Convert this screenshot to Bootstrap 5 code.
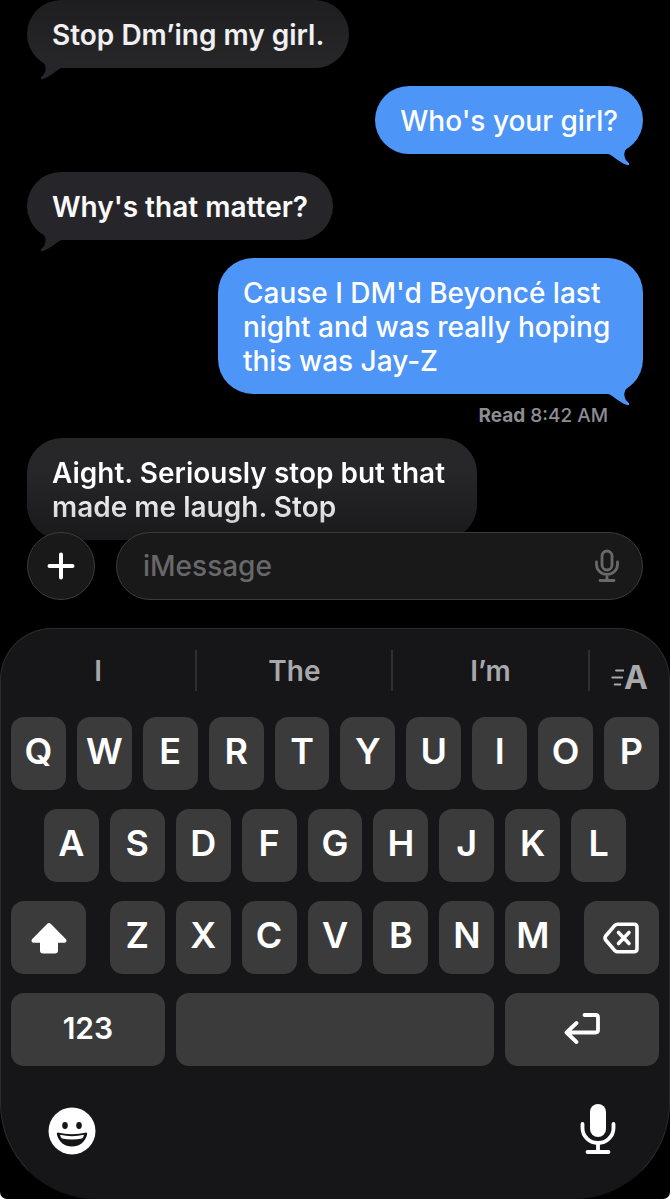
<!DOCTYPE html>
<html lang="en">
<head>
<meta charset="utf-8">
<meta name="viewport" content="width=device-width, initial-scale=1">
<title>Messages</title>
<link href="https://cdn.jsdelivr.net/npm/bootstrap@5.3.0/dist/css/bootstrap.min.css" rel="stylesheet">
<style>
  body { background: #fff; font-family: Inter, "Liberation Sans", sans-serif; font-size: 28px; line-height: 34px; font-weight: 500; }
  button { font: inherit; color: inherit; border: 0; padding: 0; background: none; }
  svg { display: block; }
  .phone { background: #000; color: #fff; border-radius: 0 0 7px 7px; }
  .thread { padding: 0 27px; gap: 18px; }
  .bubble { position: relative; padding: 18px 25px 16px; border-radius: 35px; max-width: 69%; }
  .bubble.received { background: #26262a; color: #fafafb; font-weight: 600; }
  .bubble.sent { background: #4e95f8; }
  .bubble.wide { max-width: 73%; }
  .bubble.top-fade { background: linear-gradient(#1e1e20, #27272a); color: #f0f0f2; }
  .bubble.end-fade { background: linear-gradient(#27272a 30%, #19191b); }
  .end-fade span { color: transparent; background: linear-gradient(#fff 40%, #cfcfd2); background-clip: text; -webkit-background-clip: text; }
  .tail { position: absolute; left: 0; bottom: -12px; }
  .received .tail { fill: #26262a; }
  .sent .tail { left: auto; right: 0; transform: scaleX(-1); fill: #4e95f8; }
  .receipt { font-size: 19px; line-height: 22px; color: #8d8d92; padding-right: 35px; margin: -7px 0; }
  .compose { position: relative; padding: 0 27px; margin-top: -8px; gap: 21px; }
  .glass { background: #191919; border: 1px solid #3b3b3d; height: 68px; border-radius: 34px; }
  .plus { width: 68px; }
  .field { padding: 0 20px 0 26px; }
  .field input { background: none; border: 0; outline: 0; color: #fff; font: inherit; padding: 0; }
  .field input::placeholder { color: #68686a; opacity: 1; }
  .keyboard { margin-top: 28px; background: #161618; border: 1px solid #2c2c2e; border-bottom-color: #161618; border-radius: 52px 52px 96px 96px; padding: 21px 10px 43px; }
  .suggestions { height: 41px; margin: 0 -10px 26px; color: #a9a9ac; font-weight: 600; }
  .suggestions .word { flex: 196 1 0; border-right: 2px solid #2f2f31; }
  .suggestions .fmt { flex: 80 1 0; font-size: 32px; font-weight: 700; padding-top: 14px; }
  .keys { gap: 19px; font-size: 36px; font-weight: 600; }
  .keyrow { gap: 11px; }
  .key { height: 73px; width: calc((100% - 99px) / 10); background: #3b3b3b; border-radius: 13px; padding-bottom: 5px; }
  .letters { gap: 11px; width: calc((100% - 99px) / 10 * 7 + 66px); }
  .letters .key { width: auto; flex: 1 1 0; }
  .key.side { width: 75px; padding: 0; }
  .key.space { width: calc((100% - 11px) / 2); }
  .key.bottom { flex: 1 1 0; font-size: 30px; padding-bottom: 4px; }
  .dock { margin: 37px 42px 0 37px; }
</style>
</head>
<body>
<div class="phone d-flex flex-column min-vh-100">
  <main class="thread d-flex flex-column">
    <div class="bubble received top-fade align-self-start">Stop Dm’ing my girl.
      <svg class="tail" width="40" height="23" viewBox="0 0 40 23"><path d="M12 1C17 5 20 9 18 15C17 18 15 19 14 20Q13 23 16 22C27 18 30 11 38 10L30 1Z"/></svg></div>
    <div class="bubble sent align-self-end">Who's your girl?
      <svg class="tail" width="40" height="23" viewBox="0 0 40 23"><path d="M12 1C17 5 20 9 18 15C17 18 15 19 14 20Q13 23 16 22C27 18 30 11 38 10L30 1Z"/></svg></div>
    <div class="bubble received align-self-start">Why's that matter?
      <svg class="tail" width="40" height="23" viewBox="0 0 40 23"><path d="M12 1C17 5 20 9 18 15C17 18 15 19 14 20Q13 23 16 22C27 18 30 11 38 10L30 1Z"/></svg></div>
    <div class="bubble sent align-self-end">Cause I DM'd Beyoncé last night and was really hoping this was Jay-Z
      <svg class="tail" width="40" height="23" viewBox="0 0 40 23"><path d="M12 1C17 5 20 9 18 15C17 18 15 19 14 20Q13 23 16 22C27 18 30 11 38 10L30 1Z"/></svg></div>
    <div class="receipt align-self-end"><strong>Read</strong> 8:42 AM</div>
    <div class="bubble received wide end-fade align-self-start"><span class="d-block">Aight. Seriously stop but that made me laugh. Stop</span></div>
  </main>

  <form class="compose d-flex">
    <button type="button" class="glass plus flex-shrink-0 d-flex align-items-center justify-content-center" aria-label="Add">
      <svg width="28" height="28" viewBox="0 0 28 28" stroke="#fff" stroke-width="4" stroke-linecap="round"><path d="M14 2.500V25.500M2.500 14H25.500"/></svg>
    </button>
    <div class="glass field d-flex align-items-center flex-grow-1">
      <input class="flex-grow-1 w-100" type="text" placeholder="iMessage" aria-label="iMessage">
      <button type="button" aria-label="Dictate">
        <svg width="30" height="34" viewBox="0 0 30 34" fill="none" stroke="#69696b" stroke-width="2.800" stroke-linecap="round"><rect x="10" y="2" width="10" height="19" rx="5"/><path d="M4.500 13V15.500a10.500 10 0 0 0 21 0V13M15 25.500V31M8 31.500H22"/></svg>
      </button>
    </div>
  </form>

  <section class="keyboard flex-grow-1" aria-label="Keyboard">
    <div class="suggestions d-flex">
      <button type="button" class="word">I</button>
      <button type="button" class="word">The</button>
      <button type="button" class="word">I’m</button>
      <button type="button" class="fmt d-flex align-items-center justify-content-center" aria-label="Text formatting">
        <svg width="13" height="20" viewBox="0 0 14 20" stroke="#a9a9ac" stroke-width="2.200" stroke-linecap="round"><path d="M5.500 2H14M1.500 9.500H12M4 17H10"/></svg>A
      </button>
    </div>
    <div class="keys d-flex flex-column">
      <div class="keyrow d-flex">
        <button type="button" class="key">Q</button><button type="button" class="key">W</button><button type="button" class="key">E</button><button type="button" class="key">R</button><button type="button" class="key">T</button><button type="button" class="key">Y</button><button type="button" class="key">U</button><button type="button" class="key">I</button><button type="button" class="key">O</button><button type="button" class="key">P</button>
      </div>
      <div class="keyrow d-flex justify-content-center">
        <button type="button" class="key">A</button><button type="button" class="key">S</button><button type="button" class="key">D</button><button type="button" class="key">F</button><button type="button" class="key">G</button><button type="button" class="key">H</button><button type="button" class="key">J</button><button type="button" class="key">K</button><button type="button" class="key">L</button>
      </div>
      <div class="d-flex justify-content-between">
        <button type="button" class="key side d-flex align-items-center justify-content-center" aria-label="Shift">
          <svg width="36" height="32" viewBox="0 0 36 32" fill="#fff"><path d="M16.300 1.700Q18 .2 19.700 1.700L35 17.200Q36.500 20.500 33.500 20.800H27V28.500Q27 31.500 24 31.500H12Q9 31.500 9 28.500V20.800H2.500Q-.5 20.500 1 17.200Z"/></svg>
        </button>
        <div class="letters d-flex">
          <button type="button" class="key">Z</button><button type="button" class="key">X</button><button type="button" class="key">C</button><button type="button" class="key">V</button><button type="button" class="key">B</button><button type="button" class="key">N</button><button type="button" class="key">M</button>
        </div>
        <button type="button" class="key side d-flex align-items-center justify-content-center" aria-label="Delete">
          <svg width="36" height="32" viewBox="0 0 36 32" fill="none" stroke="#fff" stroke-width="3.600" stroke-linecap="round" stroke-linejoin="round"><path d="M14.500 2.200H31Q34 2.200 34 5.200V26.800Q34 29.800 31 29.800H14.500Q13 29.800 12 28.800L2.700 18Q1.300 16 2.700 14L12 3.200Q13 2.200 14.500 2.200Z"/><path d="M15.500 10.500L26 21.500M26 10.500L15.500 21.500"/></svg>
        </button>
      </div>
      <div class="keyrow d-flex">
        <button type="button" class="key bottom">123</button>
        <button type="button" class="key space" aria-label="Space"></button>
        <button type="button" class="key bottom d-flex align-items-center justify-content-center" aria-label="Return">
          <svg width="36" height="32" viewBox="0 0 36 32" fill="none" stroke="#fff" stroke-width="3.800" stroke-linecap="round" stroke-linejoin="round"><path d="M20.500 3H31.500Q34 3 34 5.500V18Q34 20.500 31.500 20.500H3M12.500 11L2.500 20.500L12.500 30"/></svg>
        </button>
      </div>
    </div>
    <div class="dock d-flex justify-content-between align-items-end">
      <button type="button" aria-label="Emoji">
        <svg width="48" height="48" viewBox="0 0 48 48"><circle cx="24" cy="24" r="23.500" fill="#fff"/><g fill="#161618"><ellipse cx="17" cy="18.500" rx="2.800" ry="3.400"/><ellipse cx="31" cy="18.500" rx="2.800" ry="3.400"/><path d="M9.500 25.500Q24 29 38.500 25.500Q39.500 25.500 39 28C37 35 31.500 39.500 24 39.500S11 35 9 28Q8.500 25.500 9.500 25.500Z"/></g><path d="M12 27.800Q24 30.500 36 27.800Q35.500 30.500 34 31.500Q24 33.500 14 31.500Q12.500 30.500 12 27.800Z" fill="#fff"/></svg>
      </button>
      <button type="button" aria-label="Dictation">
        <svg width="38" height="52" viewBox="0 0 38 52" fill="none" stroke="#fff" stroke-width="3.800" stroke-linecap="round"><rect x="11" y="1" width="16" height="33" rx="8" fill="#fff" stroke="none"/><path d="M3.500 21V25a15.500 15 0 0 0 31 0V21M19 40V48M8.500 49H29.500"/></svg>
      </button>
    </div>
  </section>
</div>
<script src="https://cdn.jsdelivr.net/npm/bootstrap@5.3.0/dist/js/bootstrap.bundle.min.js"></script>
</body>
</html>
